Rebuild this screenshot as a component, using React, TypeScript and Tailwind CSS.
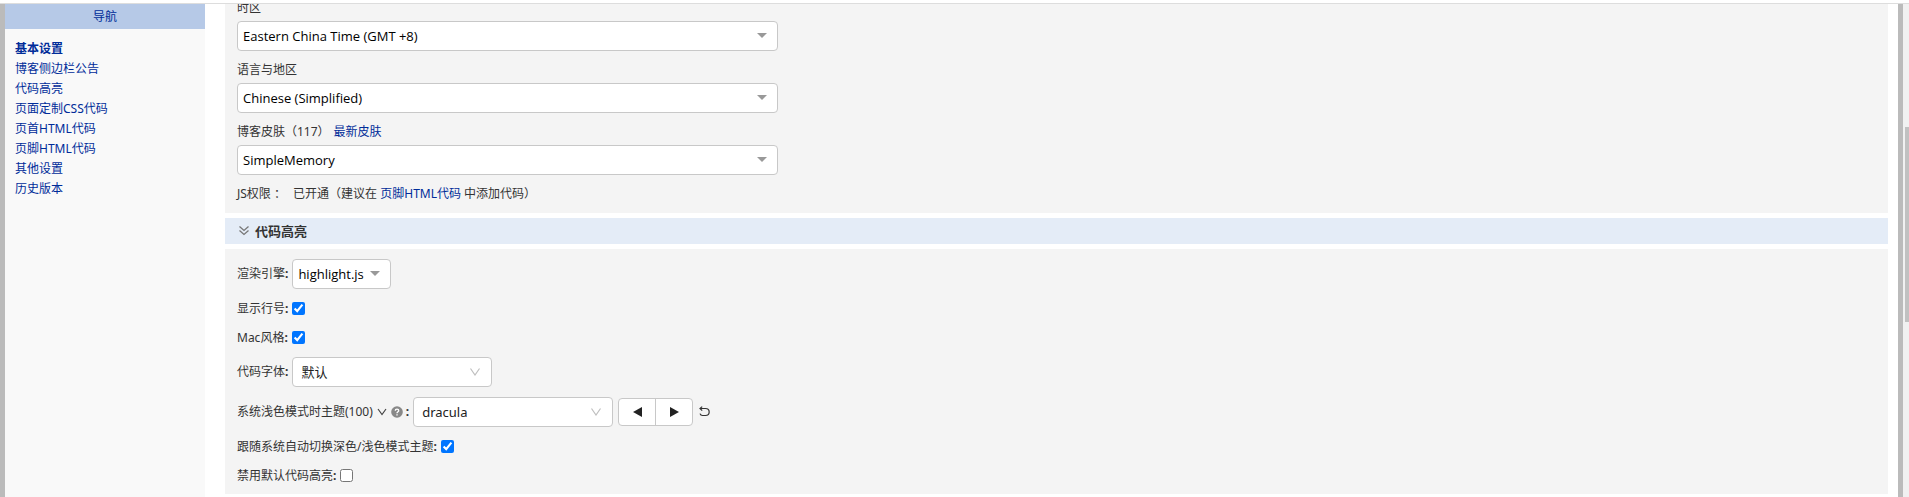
import { useState } from "react";
import type { ReactNode, SelectHTMLAttributes } from "react";

const navItems = [
  "基本设置",
  "博客侧边栏公告",
  "代码高亮",
  "页面定制CSS代码",
  "页首HTML代码",
  "页脚HTML代码",
  "其他设置",
  "历史版本",
];

function NativeSelect({
  className,
  children,
  ...props
}: SelectHTMLAttributes<HTMLSelectElement>) {
  return (
    <div className={`relative ${className}`}>
      <select
        {...props}
        className="block h-[30px] w-full appearance-none rounded border border-[#c8c8c8] bg-white pr-5 pl-[5px] font-['Open_Sans','Noto_Sans_CJK_SC',sans-serif] text-[13px] text-black"
      >
        {children}
      </select>
      <svg
        className="pointer-events-none absolute top-3 right-[11px]"
        width="10"
        height="5"
        viewBox="0 0 10 5"
      >
        <path d="M0 0h10L5 5z" fill="#999" />
      </svg>
    </div>
  );
}

function ThemeSelect({
  children,
  ...props
}: SelectHTMLAttributes<HTMLSelectElement>) {
  return (
    <div className="relative w-[200px]">
      <select
        {...props}
        className="block h-[30px] w-full appearance-none rounded border border-[#c8c8c8] bg-white pr-7 pl-2 text-[13px] text-[#222]"
      >
        {children}
      </select>
      <svg
        className="pointer-events-none absolute top-[11px] right-3"
        width="10"
        height="8"
        viewBox="0 0 10 8"
        fill="none"
        stroke="#bfbfbf"
        strokeWidth="1.2"
      >
        <path d="M0.5 0.5L5 7L9.5 0.5" />
      </svg>
    </div>
  );
}

function CheckRow({
  id,
  label,
  defaultChecked,
}: {
  id: string;
  label: string;
  defaultChecked?: boolean;
}) {
  return (
    <div className="flex h-[19px] items-center gap-1">
      <label htmlFor={id}>
        {label}
        <b>:</b>
      </label>
      <input
        id={id}
        type="checkbox"
        defaultChecked={defaultChecked}
        className="h-[13px] w-[13px]"
      />
    </div>
  );
}

function Field({
  id,
  label,
  extra,
  children,
}: {
  id: string;
  label: string;
  extra?: ReactNode;
  children: ReactNode;
}) {
  return (
    <div className="flex flex-col gap-1">
      <div className="flex">
        <label htmlFor={id}>{label}</label>
        {extra}
      </div>
      {children}
    </div>
  );
}

export default function App() {
  const [active, setActive] = useState("基本设置");

  return (
    <div className="flex h-screen flex-col overflow-hidden bg-white font-['Noto_Sans','Noto_Sans_CJK_SC',sans-serif] text-xs leading-[18px] text-[#333]">
      <div className="h-1 shrink-0 border-b border-[#ddd]" />

      <div className="flex min-h-0 flex-1">
        {/* Sidebar */}
        <aside className="w-[205px] shrink-0 border-l-5 border-[#bbb] bg-[#f9f9f9]">
          <h2 className="h-[25px] bg-[#b6c9e7] text-center leading-[25px] text-[#002c99]">
            导航
          </h2>
          <ul className="px-2.5 pt-2.5 leading-5 text-[#002c99]">
            {navItems.map((item) => (
              <li key={item}>
                <a
                  href="#"
                  onClick={() => setActive(item)}
                  className={item === active ? "font-bold" : ""}
                >
                  {item}
                </a>
              </li>
            ))}
          </ul>
        </aside>

        {/* Main */}
        <main className="min-w-0 flex-1 overflow-hidden border-r-5 border-[#bbb] pr-2.5 pl-5">
          <section className="-mt-[5px] flex flex-col gap-2.5 bg-[#f4f4f4] px-3 pb-2.5">
            <Field id="timezone" label="时区">
              <NativeSelect id="timezone" className="w-[541px]">
                <option>Eastern China Time (GMT +8)</option>
              </NativeSelect>
            </Field>
            <Field id="language" label="语言与地区">
              <NativeSelect id="language" className="w-[541px]">
                <option>Chinese (Simplified)</option>
              </NativeSelect>
            </Field>
            <Field
              id="skin"
              label="博客皮肤（117）"
              extra={
                <a href="#" className="ml-1 text-[#002c99]">
                  最新皮肤
                </a>
              }
            >
              <NativeSelect id="skin" className="w-[541px]">
                <option>SimpleMemory</option>
              </NativeSelect>
            </Field>
            <p>
              <span className="mr-1">JS权限 ：</span> 已开通（建议在{" "}
              <a href="#" className="text-[#002c99]">
                页脚HTML代码
              </a>{" "}
              中添加代码）
            </p>
          </section>

          <h3 className="my-[5px] flex h-[26px] items-center gap-1.5 bg-[#e4ecf7] pl-3.5 text-[13px] font-bold">
            <svg
              width="10"
              height="10"
              viewBox="0 0 10 10"
              fill="none"
              stroke="#777"
              strokeWidth="1.3"
            >
              <path d="M0.5 0.5L5 4.5L9.5 0.5M0.5 4.5L5 8.5L9.5 4.5" />
            </svg>
            代码高亮
          </h3>

          <section className="flex flex-col gap-2.5 bg-[#f4f4f4] px-3 pt-2.5 pb-[9px]">
            <div className="flex items-center gap-1">
              <label htmlFor="engine">
                渲染引擎<b>:</b>
              </label>
              <NativeSelect id="engine" className="w-[99px]">
                <option>highlight.js</option>
              </NativeSelect>
            </div>
            <CheckRow id="line-number" label="显示行号" defaultChecked />
            <CheckRow id="mac-style" label="Mac风格" defaultChecked />
            <div className="flex items-center gap-1">
              <label htmlFor="code-font">
                代码字体<b>:</b>
              </label>
              <ThemeSelect id="code-font">
                <option>默认</option>
              </ThemeSelect>
            </div>

            <div className="flex items-center">
              <label htmlFor="light-theme">系统浅色模式时主题(100)</label>
              <svg
                className="mx-1"
                width="10"
                height="8"
                viewBox="0 0 10 8"
                fill="none"
                stroke="#444"
                strokeWidth="1.2"
              >
                <path d="M1 1L5 6.5L9 1" />
              </svg>
              <svg className="mr-[3px]" width="12" height="12" viewBox="0 0 12 12">
                <circle cx="6" cy="6" r="5.8" fill="#888" />
                <path
                  d="M4.3 4.7C4.3 2.6 7.7 2.6 7.7 4.7C7.7 5.8 6 5.8 6 7.2M6 8.2V9.4"
                  fill="none"
                  stroke="#fff"
                  strokeWidth="1.4"
                />
              </svg>
              <b className="mr-1">:</b>
              <ThemeSelect id="light-theme">
                <option>dracula</option>
              </ThemeSelect>
              <div className="ml-[5px] flex h-7 w-[75px] divide-x divide-[#c8c8c8] rounded border border-[#c8c8c8] bg-white">
                <button
                  type="button"
                  aria-label="上一个"
                  className="flex flex-1 items-center justify-center"
                >
                  <svg width="9" height="10" viewBox="0 0 9 10">
                    <path d="M9 0v10L0 5z" fill="#222" />
                  </svg>
                </button>
                <button
                  type="button"
                  aria-label="下一个"
                  className="flex flex-1 items-center justify-center"
                >
                  <svg width="9" height="10" viewBox="0 0 9 10">
                    <path d="M0 0v10L9 5z" fill="#222" />
                  </svg>
                </button>
              </div>
              <button type="button" aria-label="重置" className="ml-1.5">
                <svg
                  width="11"
                  height="12"
                  viewBox="0 0 11 12"
                  fill="none"
                  stroke="#333"
                  strokeWidth="1.2"
                >
                  <path d="M3.2 0.6L1 2.5L3.2 4.6M1 2.5H6.5C11.4 2.5 11.4 9.5 6.5 9.5H3.5C2.3 9.5 1.4 8.8 1 7.6" />
                </svg>
              </button>
            </div>

            <CheckRow
              id="follow-system"
              label="跟随系统自动切换深色/浅色模式主题"
              defaultChecked
            />
            <CheckRow id="disable-default" label="禁用默认代码高亮" />
          </section>
        </main>

        {/* Scrollbar */}
        <div className="w-1.5 shrink-0 bg-[#f1f1f1] pt-[123px] pl-0.5">
          <div className="h-[195px] bg-[#c1c1c1]" />
        </div>
      </div>
    </div>
  );
}
